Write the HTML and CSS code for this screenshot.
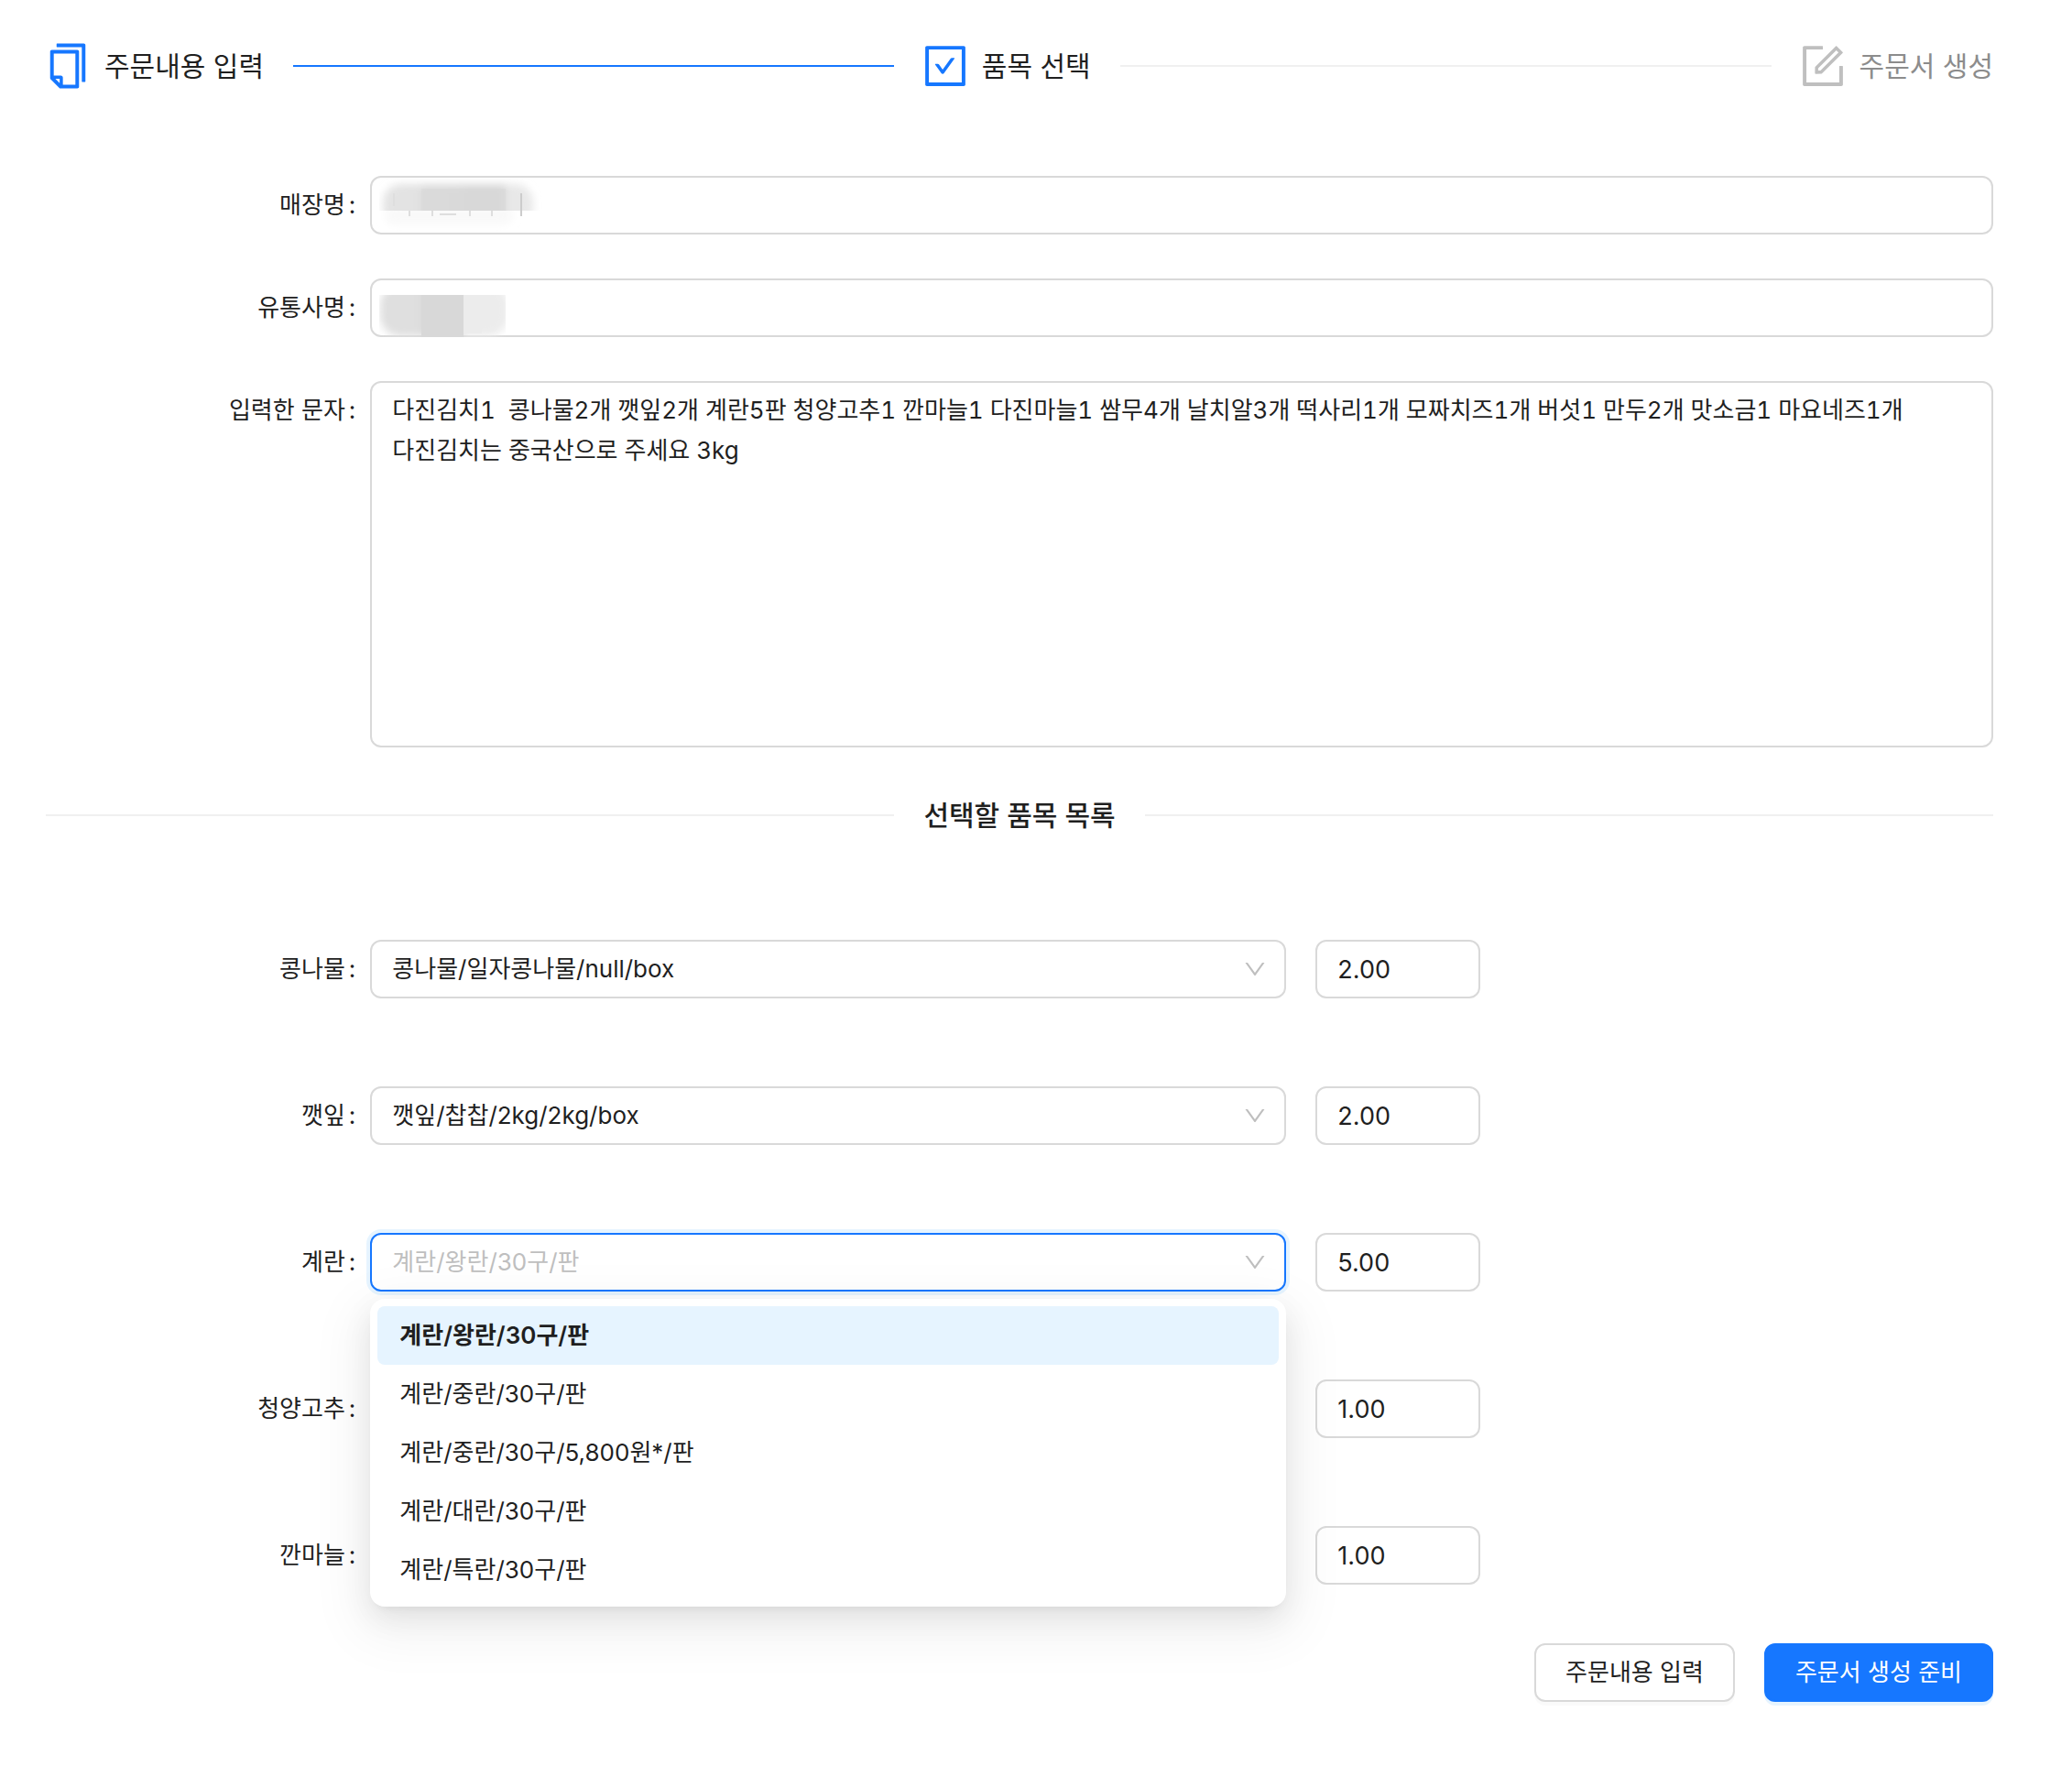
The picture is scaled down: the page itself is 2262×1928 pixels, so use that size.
FILE: index.html
```html
<!DOCTYPE html>
<html lang="ko">
<head>
<meta charset="utf-8">
<meta name="viewport" content="width=device-width, initial-scale=1">
<title>품목 선택</title>
<link rel="stylesheet" href="styles.css">
</head>
<body>
<svg class="sprite" aria-hidden="true">
  <symbol id="icon-down" viewBox="0 0 1024 1024"><path d="M884 256h-75c-5.1 0-9.9 2.5-12.9 6.6L512 654.2 227.9 262.6c-3-4.1-7.8-6.6-12.9-6.6h-75c-6.5 0-10.3 7.4-6.5 12.7l352.6 486.1c12.8 17.6 39 17.6 51.7 0l352.6-486.1c3.9-5.3.1-12.7-6.4-12.7z"/></symbol>
</svg>
<main class="page">
  <ol class="steps">
    <li class="step step-done">
      <span class="step-icon"><svg viewBox="0 0 1024 1024" aria-hidden="true"><path d="M832 64H296c-4.400 0-8 3.600-8 8v56c0 4.400 3.600 8 8 8h496v688c0 4.400 3.600 8 8 8h56c4.400 0 8-3.600 8-8V96c0-17.700-14.300-32-32-32zM704 192H192c-17.700 0-32 14.300-32 32v530.700c0 8.500 3.400 16.600 9.400 22.600l173.300 173.300c2.200 2.200 4.700 4 7.400 5.500v1.900h4.200c3.500 1.300 7.200 2 11 2H704c17.700 0 32-14.300 32-32V224c0-17.700-14.300-32-32-32zM350 856.200L263.900 770H350v86.200zM664 888H414V746c0-22.100-17.900-40-40-40H232V264h432v624z"/></svg></span>
      <span class="step-title">주문내용 입력</span>
    </li>
    <li class="step step-current" aria-current="step">
      <span class="step-icon"><svg viewBox="0 0 1024 1024" aria-hidden="true"><path d="M433.100 657.700a31.800 31.800 0 0 0 51.700 0l210.600-292c3.800-5.300 0-12.700-6.500-12.700H642c-10.200 0-19.900 4.900-25.900 13.300L459 584.300l-71.200-98.800c-6-8.300-15.600-13.300-25.900-13.300H315c-6.500 0-10.300 7.400-6.500 12.700l124.600 172.800z"/><path d="M880 112H144c-17.700 0-32 14.300-32 32v736c0 17.700 14.300 32 32 32h736c17.700 0 32-14.300 32-32V144c0-17.700-14.300-32-32-32zm-40 728H184V184h656v656z"/></svg></span>
      <span class="step-title">품목 선택</span>
    </li>
    <li class="step step-wait">
      <span class="step-icon"><svg viewBox="0 0 1024 1024" aria-hidden="true"><path d="M904 512h-56c-4.400 0-8 3.600-8 8v320H184V184h320c4.400 0 8-3.600 8-8v-56c0-4.400-3.600-8-8-8H144c-17.700 0-32 14.300-32 32v736c0 17.700 14.300 32 32 32h736c17.700 0 32-14.300 32-32V520c0-4.400-3.600-8-8-8z"/><path d="M355.900 534.900L354 653.800c-.1 8.900 7.100 16.200 16 16.200h.4l118-2.900c2-.1 4-.9 5.400-2.300l415.900-415c3.100-3.100 3.100-8.200 0-11.300L785.400 114.300c-1.600-1.600-3.600-2.300-5.700-2.300s-4.100.8-5.700 2.300l-415.800 415a8.300 8.300 0 0 0-2.300 5.600zm63.500 23.600L779.700 199l45.200 45.100-360.500 359.700-45.700 1.100.7-46.400z"/></svg></span>
      <span class="step-title">주문서 생성</span>
    </li>
  </ol>

  <form class="order-form">
    <section class="summary">
      <div class="row">
        <label class="label" for="store">매장명</label>
        <div class="control">
          <input class="field" id="store" type="text">
          <svg class="mask" viewBox="0 0 200 60" aria-hidden="true">
            <defs>
              <filter id="soft" x="-20%" y="-40%" width="140%" height="180%"><feGaussianBlur stdDeviation="4"/></filter>
              <clipPath id="clip-store"><rect x="8" y="0" width="180" height="36"/></clipPath>
              <linearGradient id="tone-store" gradientUnits="userSpaceOnUse" x1="8" y1="0" x2="192" y2="0">
                <stop offset="0" stop-color="#e4e4e4"/><stop offset=".25" stop-color="#e2e2e2"/>
                <stop offset=".25" stop-color="#dbdbdb"/><stop offset=".5" stop-color="#dadada"/>
                <stop offset=".5" stop-color="#d8d8d8"/><stop offset=".75" stop-color="#d8d8d8"/>
                <stop offset=".75" stop-color="#e8e8e8"/><stop offset="1" stop-color="#e8e8e8"/>
              </linearGradient>
            </defs>
            <rect x="14" y="30" width="140" height="22" rx="11" fill="#f9f9f9" filter="url(#soft)"/>
            <g clip-path="url(#clip-store)">
              <rect x="12" y="7" width="164" height="46" rx="20" fill="url(#tone-store)" filter="url(#soft)"/>
              <rect x="54" y="12" width="92" height="24" fill="#d9d9d9" opacity=".6"/>
            </g>
            <path d="M24 17v14M41 36v6M66 36v6M74 40h18M107 36v6M131 36v6" stroke="#dedede" stroke-width="2" fill="none"/>
            <path d="M163 17v25" stroke="#cccccc" stroke-width="2"/>
          </svg>
        </div>
      </div>
      <div class="row">
        <label class="label" for="vendor">유통사명</label>
        <div class="control">
          <input class="field" id="vendor" type="text">
          <svg class="mask" viewBox="0 0 200 64" aria-hidden="true">
            <defs>
              <clipPath id="clip-vendor"><rect x="8" y="16" width="138" height="46"/></clipPath>
              <linearGradient id="tone-vendor" gradientUnits="userSpaceOnUse" x1="8" y1="0" x2="146" y2="0">
                <stop offset="0" stop-color="#dfdfdf"/><stop offset=".3333" stop-color="#dfdfdf"/>
                <stop offset=".3333" stop-color="#d7d7d7"/><stop offset=".6667" stop-color="#d7d7d7"/>
                <stop offset=".6667" stop-color="#ececec"/><stop offset="1" stop-color="#ececec"/>
              </linearGradient>
            </defs>
            <g clip-path="url(#clip-vendor)">
              <rect x="9" y="5" width="140" height="56" rx="22" fill="url(#tone-vendor)" filter="url(#soft)"/>
              <rect x="54" y="16" width="46" height="46" fill="#d8d8d8"/>
              <rect x="100" y="16" width="20" height="42" fill="#ececec"/>
            </g>
          </svg>
        </div>
      </div>
      <div class="row">
        <label class="label" for="message">입력한 문자</label>
        <div class="control">
          <textarea class="field message" id="message">다진김치1  콩나물2개 깻잎2개 계란5판 청양고추1 깐마늘1 다진마늘1 쌈무4개 날치알3개 떡사리1개 모짜치즈1개 버섯1 만두2개 맛소금1 마요네즈1개
다진김치는 중국산으로 주세요 3kg</textarea>
        </div>
      </div>
    </section>

    <h2 class="divider">선택할 품목 목록</h2>

    <section class="items">
      <div class="row">
        <label class="label" for="item1">콩나물</label>
        <div class="pair">
          <div class="control picker"><select class="field" id="item1"><option>콩나물/일자콩나물/null/box</option></select><svg class="arrow" aria-hidden="true"><use href="#icon-down"/></svg></div>
          <input class="field qty" type="text" value="2.00" aria-label="콩나물 수량">
        </div>
      </div>
      <div class="row">
        <label class="label" for="item2">깻잎</label>
        <div class="pair">
          <div class="control picker"><select class="field" id="item2"><option>깻잎/찹찹/2kg/2kg/box</option></select><svg class="arrow" aria-hidden="true"><use href="#icon-down"/></svg></div>
          <input class="field qty" type="text" value="2.00" aria-label="깻잎 수량">
        </div>
      </div>
      <div class="row">
        <label class="label" for="item3">계란</label>
        <div class="pair">
          <div class="control picker picker-open">
            <select class="field" id="item3"><option>계란/왕란/30구/판</option></select><svg class="arrow" aria-hidden="true"><use href="#icon-down"/></svg>
            <ul class="menu" role="listbox" aria-label="계란">
              <li class="option option-selected" role="option" aria-selected="true">계란/왕란/30구/판</li>
              <li class="option" role="option">계란/중란/30구/판</li>
              <li class="option" role="option">계란/중란/30구/5,800원*/판</li>
              <li class="option" role="option">계란/대란/30구/판</li>
              <li class="option" role="option">계란/특란/30구/판</li>
            </ul>
          </div>
          <input class="field qty" type="text" value="5.00" aria-label="계란 수량">
        </div>
      </div>
      <div class="row">
        <label class="label" for="item4">청양고추</label>
        <div class="pair">
          <div class="control picker"><select class="field" id="item4"></select><svg class="arrow" aria-hidden="true"><use href="#icon-down"/></svg></div>
          <input class="field qty" type="text" value="1.00" aria-label="청양고추 수량">
        </div>
      </div>
      <div class="row">
        <label class="label" for="item5">깐마늘</label>
        <div class="pair">
          <div class="control picker"><select class="field" id="item5"></select><svg class="arrow" aria-hidden="true"><use href="#icon-down"/></svg></div>
          <input class="field qty" type="text" value="1.00" aria-label="깐마늘 수량">
        </div>
      </div>
    </section>

    <div class="actions">
      <button class="button" type="button">주문내용 입력</button>
      <button class="button button-primary" type="submit">주문서 생성 준비</button>
    </div>
  </form>
</main>
</body>
</html>
```
FILE: styles.css
```css
:root {
  --primary: #1677ff;
  --text: #1f1f1f;
  --border: #d9d9d9;
  --split: #f0f0f0;
  --font: Inter, "Noto Sans CJK KR", sans-serif;
}

*, *::before, *::after { box-sizing: border-box; }

body {
  margin: 0;
  background: #fff;
  color: var(--text);
  font: 26px/44px var(--font);
}

.sprite { display: none; }

.page { padding: 40px 86px 70px 50px; }

/* Steps */
.steps {
  display: flex;
  gap: 32px;
  margin: 0;
  padding: 0;
  list-style: none;
}
.step {
  display: flex;
  flex: 1;
  align-items: center;
  height: 64px;
}
.step:last-child { flex: none; }
.step:not(:last-child)::after {
  content: "";
  flex: 1;
  height: 2px;
  margin-left: 32px;
  background: var(--split);
}
.step-done:not(:last-child)::after { background: var(--primary); }
.step-icon {
  display: flex;
  justify-content: center;
  width: 48px;
  margin-right: 16px;
  color: var(--primary);
}
.step-icon svg {
  flex: none;
  width: 56px;
  height: 56px;
  fill: currentColor;
}
.step-title {
  font-size: 30px;
  white-space: nowrap;
}
.step-wait .step-icon { color: #bfbfbf; }
.step-wait .step-title { color: #8c8c8c; }

/* Form rows */
.summary {
  display: grid;
  gap: 48px;
  margin-top: 88px;
}
.items {
  display: grid;
  gap: 96px;
}
.row {
  display: grid;
  grid-template-columns: 1fr 5fr;
}
.label {
  height: 64px;
  line-height: 64px;
  text-align: right;
  white-space: nowrap;
}
.label::after {
  content: ":";
  margin: 0 16px 0 4px;
}
.control { position: relative; }
.pair {
  display: flex;
  gap: 32px;
}
.picker {
  flex: 0 1 1000px;
  min-width: 0;
}

.field {
  display: block;
  width: 100%;
  height: 64px;
  margin: 0;
  padding: 8px 22px;
  border: 2px solid var(--border);
  border-radius: 12px;
  outline: 0;
  appearance: none;
  background: #fff;
  color: var(--text);
  font: inherit;
}
.message {
  height: 400px;
  font-variant-numeric: tabular-nums;
  resize: none;
}
.qty {
  flex: none;
  width: 180px;
  font-size: 27px;
}

/* Blurred-out private values */
.mask {
  position: absolute;
  top: 2px;
  left: 2px;
  width: 200px;
  height: auto;
  pointer-events: none;
}

.arrow {
  position: absolute;
  top: 18px;
  right: 20px;
  width: 28px;
  height: 28px;
  fill: #bfbfbf;
  pointer-events: none;
}

.picker-open { z-index: 1; }
.picker-open .field {
  border-color: var(--primary);
  box-shadow: 0 0 0 4px rgba(5, 145, 255, 0.1);
  color: #bfbfbf;
}
.menu {
  position: absolute;
  top: 72px;
  left: 0;
  width: 100%;
  margin: 0;
  padding: 8px;
  border-radius: 16px;
  background: #fff;
  box-shadow:
    0 12px 32px 0 rgba(0, 0, 0, 0.08),
    0 6px 12px -8px rgba(0, 0, 0, 0.12),
    0 18px 56px 16px rgba(0, 0, 0, 0.05);
  list-style: none;
}
.option {
  padding: 10px 24px;
  border-radius: 8px;
}
.option-selected {
  background: #e6f4ff;
  font-weight: 600;
}

/* Titled divider */
.divider {
  display: flex;
  align-items: center;
  gap: 32px;
  margin: 48px 0 110px;
  font-size: 30px;
  font-weight: 500;
  line-height: 52px;
  white-space: nowrap;
}
.divider::before,
.divider::after {
  content: "";
  flex: 1;
  height: 2px;
  background: var(--split);
}

/* Actions */
.actions {
  display: flex;
  justify-content: flex-end;
  gap: 32px;
  margin-top: 64px;
}
.button {
  height: 64px;
  padding: 8px 32px;
  border: 2px solid var(--border);
  border-radius: 12px;
  background: #fff;
  box-shadow: 0 4px 0 rgba(0, 0, 0, 0.02);
  color: var(--text);
  font: inherit;
  white-space: nowrap;
}
.button-primary {
  border-color: var(--primary);
  background: var(--primary);
  box-shadow: 0 4px 0 rgba(5, 145, 255, 0.1);
  color: #fff;
}
```
